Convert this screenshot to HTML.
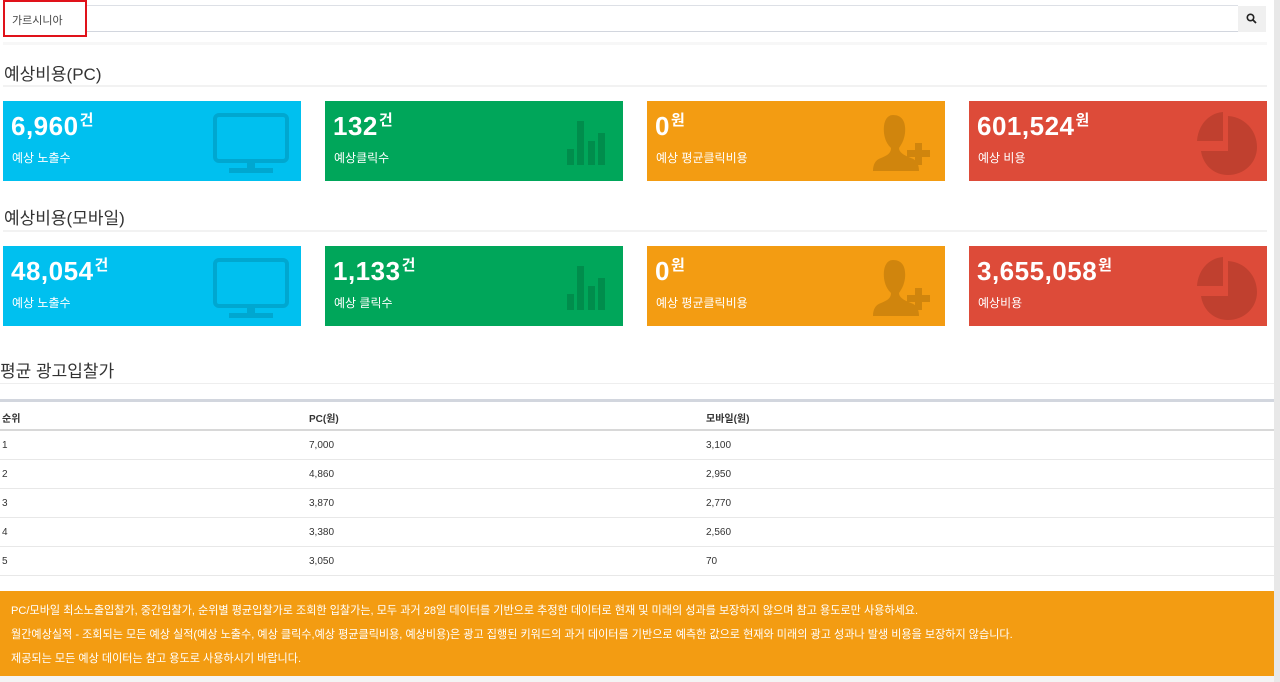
<!DOCTYPE html>
<html><head><meta charset="utf-8"><style>
*{box-sizing:border-box;margin:0;padding:0}
body{width:1280px;height:682px;overflow:hidden;background:#fff;font-family:"Liberation Sans","Noto Sans CJK KR",sans-serif;color:#333;position:relative}
.abs{position:absolute}
.box{position:absolute;width:298px;height:80px;color:#fff;overflow:hidden}
.num{position:absolute;left:8px;top:10px;font-size:26px;font-weight:bold;letter-spacing:0.5px}
.num sup{font-size:15px;vertical-align:top;position:relative;top:-2px;margin-left:1px}
.lbl{position:absolute;left:9px;top:48px;font-size:12px}
.ico{position:absolute;right:10px;top:10px}
h3{position:absolute;font-weight:normal;font-size:17px;color:#333}
.hr{position:absolute;left:3px;width:1264px;height:2px;background:#f2f2f2}
.row{position:absolute;left:0;width:1274px;height:29px;border-bottom:1px solid #e8e8e8;font-size:10px}
.row span{position:absolute;top:9px}
.foot{position:absolute;left:0;top:591px;width:1274px;height:85px;background:#f39c12;color:#fff;font-size:11.1px}
.foot div{position:absolute;left:11px;white-space:nowrap}
</style></head><body>
<div class="abs" style="left:1274px;top:0;width:6px;height:682px;background:#e8e8e8"></div>
<div class="abs" style="left:70px;top:5px;width:1168px;height:27px;border-top:1px solid #dde0e6;border-bottom:1px solid #d2d6de"></div>
<div class="abs" style="left:1238px;top:6px;width:28px;height:26px;background:#f0f0f0"></div>
<svg class="abs" style="left:1246px;top:13px" width="11" height="11" viewBox="0 0 11 11"><circle cx="4.5" cy="4.5" r="3.2" fill="none" stroke="#222" stroke-width="1.6"/><path d="M7 7 L10 10" stroke="#222" stroke-width="1.8"/></svg>
<div class="abs" style="left:3px;top:0;width:84px;height:37px;border:2px solid #e0121a;background:#fff"></div>
<div class="abs" style="left:12px;top:12px;font-size:11px;color:#444">가르시니아</div>
<div class="abs" style="left:3px;top:42px;width:1264px;height:3px;background:#f7f7f7"></div>
<h3 style="left:4px;top:60px">예상비용(PC)</h3>
<div class="hr" style="top:85px"></div>

<div class="box" style="left:3px;top:101px;background:#00c0ef"><div class="num">6,960<sup>건</sup></div><div class="lbl">예상 노출수</div>
<svg class="ico" style="right:12px;top:12px" width="76" height="62" viewBox="0 0 76 62"><rect x="2" y="2" width="72" height="46" rx="4" fill="none" stroke="#00a7d0" stroke-width="4"/><rect x="34" y="48" width="8" height="7" fill="#00a7d0"/><rect x="16" y="55" width="44" height="5" fill="#00a7d0"/></svg></div>
<div class="box" style="left:325px;top:101px;background:#00a65a"><div class="num">132<sup>건</sup></div><div class="lbl">예상클릭수</div>
<svg class="ico" style="right:6px;top:18px" width="50" height="46" viewBox="0 0 50 46"><rect x="0" y="30" width="7" height="16" fill="#008d4c"/><rect x="10" y="2" width="7" height="44" fill="#008d4c"/><rect x="21" y="22" width="7" height="24" fill="#008d4c"/><rect x="31" y="14" width="7" height="32" fill="#008d4c"/></svg></div>
<div class="box" style="left:647px;top:101px;background:#f39c12"><div class="num">0<sup>원</sup></div><div class="lbl">예상 평균클릭비용</div>
<svg class="ico" style="right:6px;top:14px" width="66" height="56" viewBox="0 0 66 56"><path d="M20 0 C30 0 33 8 32 18 C31 26 28 30 26 33 C26 37 30 40 38 43 C44 45 46 50 46 56 L0 56 C0 50 2 45 8 43 C16 40 18 37 18 33 C15 30 12 26 11 18 C10 8 13 0 20 0Z" fill="#d0850d"/><rect x="42" y="28" width="7" height="22" fill="#d0850d"/><rect x="34" y="35" width="23" height="7" fill="#d0850d"/></svg></div>
<div class="box" style="left:969px;top:101px;background:#dd4b39"><div class="num">601,524<sup>원</sup></div><div class="lbl">예상 비용</div>
<svg class="ico" style="right:8px;top:10px" width="62" height="64" viewBox="0 0 62 64"><path d="M26 1 L26 30 L0 30 C1 14 12 2 26 1Z" fill="#c0402f"/><path d="M31 5 C48 6 60 20 60 36 C60 52 47 64 31 64 C17 64 6 54 4 40 L31 40 Z" fill="#c0402f"/></svg></div>

<h3 style="left:4px;top:204px">예상비용(모바일)</h3>
<div class="hr" style="top:230px"></div>

<div class="box" style="left:3px;top:246px;background:#00c0ef"><div class="num">48,054<sup>건</sup></div><div class="lbl">예상 노출수</div>
<svg class="ico" style="right:12px;top:12px" width="76" height="62" viewBox="0 0 76 62"><rect x="2" y="2" width="72" height="46" rx="4" fill="none" stroke="#00a7d0" stroke-width="4"/><rect x="34" y="48" width="8" height="7" fill="#00a7d0"/><rect x="16" y="55" width="44" height="5" fill="#00a7d0"/></svg></div>
<div class="box" style="left:325px;top:246px;background:#00a65a"><div class="num">1,133<sup>건</sup></div><div class="lbl">예상 클릭수</div>
<svg class="ico" style="right:6px;top:18px" width="50" height="46" viewBox="0 0 50 46"><rect x="0" y="30" width="7" height="16" fill="#008d4c"/><rect x="10" y="2" width="7" height="44" fill="#008d4c"/><rect x="21" y="22" width="7" height="24" fill="#008d4c"/><rect x="31" y="14" width="7" height="32" fill="#008d4c"/></svg></div>
<div class="box" style="left:647px;top:246px;background:#f39c12"><div class="num">0<sup>원</sup></div><div class="lbl">예상 평균클릭비용</div>
<svg class="ico" style="right:6px;top:14px" width="66" height="56" viewBox="0 0 66 56"><path d="M20 0 C30 0 33 8 32 18 C31 26 28 30 26 33 C26 37 30 40 38 43 C44 45 46 50 46 56 L0 56 C0 50 2 45 8 43 C16 40 18 37 18 33 C15 30 12 26 11 18 C10 8 13 0 20 0Z" fill="#d0850d"/><rect x="42" y="28" width="7" height="22" fill="#d0850d"/><rect x="34" y="35" width="23" height="7" fill="#d0850d"/></svg></div>
<div class="box" style="left:969px;top:246px;background:#dd4b39"><div class="num">3,655,058<sup>원</sup></div><div class="lbl">예상비용</div>
<svg class="ico" style="right:8px;top:10px" width="62" height="64" viewBox="0 0 62 64"><path d="M26 1 L26 30 L0 30 C1 14 12 2 26 1Z" fill="#c0402f"/><path d="M31 5 C48 6 60 20 60 36 C60 52 47 64 31 64 C17 64 6 54 4 40 L31 40 Z" fill="#c0402f"/></svg></div>

<h3 style="left:0px;top:357px">평균 광고입찰가</h3>
<div class="hr" style="top:383px;left:0;width:1274px;height:1px;background:#eee"></div>
<div class="abs" style="left:0;top:399px;width:1274px;height:3px;background:#d2d6de"></div>
<div class="row" style="top:402px;height:29px;border-bottom:2px solid #d8d8d8;font-weight:bold"><span style="left:2px;top:8px">순위</span><span style="left:309px;top:8px">PC(원)</span><span style="left:706px;top:8px">모바일(원)</span></div>
<div class="row" style="top:431px"><span style="left:2px">1</span><span style="left:309px">7,000</span><span style="left:706px">3,100</span></div>
<div class="row" style="top:460px"><span style="left:2px">2</span><span style="left:309px">4,860</span><span style="left:706px">2,950</span></div>
<div class="row" style="top:489px"><span style="left:2px">3</span><span style="left:309px">3,870</span><span style="left:706px">2,770</span></div>
<div class="row" style="top:518px"><span style="left:2px">4</span><span style="left:309px">3,380</span><span style="left:706px">2,560</span></div>
<div class="row" style="top:547px"><span style="left:2px">5</span><span style="left:309px">3,050</span><span style="left:706px">70</span></div>

<div class="foot">
<div style="top:11px">PC/모바일 최소노출입찰가, 중간입찰가, 순위별 평균입찰가로 조회한 입찰가는, 모두 과거 28일 데이터를 기반으로 추정한 데이터로 현재 및 미래의 성과를 보장하지 않으며 참고 용도로만 사용하세요.</div>
<div style="top:35px">월간예상실적 - 조회되는 모든 예상 실적(예상 노출수, 예상 클릭수,예상 평균클릭비용, 예상비용)은 광고 집행된 키워드의 과거 데이터를 기반으로 예측한 값으로 현재와 미래의 광고 성과나 발생 비용을 보장하지 않습니다.</div>
<div style="top:59px">제공되는 모든 예상 데이터는 참고 용도로 사용하시기 바랍니다.</div>
</div>
<div class="abs" style="left:0;top:676px;width:1274px;height:6px;background:#f4f4f4"></div>
</body></html>
